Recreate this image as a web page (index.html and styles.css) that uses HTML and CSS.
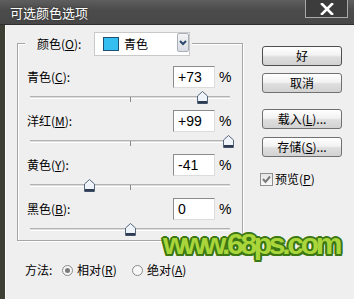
FILE: index.html
```html
<!DOCTYPE html>
<html>
<head>
<meta charset="utf-8">
<link rel="stylesheet" href="styles.css">
</head>
<body>
<div class="window">
  <div class="titlebar">
    <span class="title">可选颜色选项</span>
    <span class="close"><svg width="14" height="12" viewBox="0 0 14 12"><path d="M2 1 L12 11 M12 1 L2 11" stroke="#fff" stroke-width="2.6" stroke-linecap="square"/></svg></span>
  </div>
  <div class="frame">
    <div class="left">
      <div class="group">
        <div class="legend">
          <span class="leg-label">颜色(<u>O</u>):</span>
          <div class="select">
            <span class="swatch"></span>
            <span class="sel-text">青色</span>
            <span class="arrow"><svg width="8" height="6" viewBox="0 0 8 6"><path d="M1 1 L4 4 L7 1" fill="none" stroke="#2c4a6e" stroke-width="2"/></svg></span>
          </div>
        </div>
        <div class="row">
          <div class="line"><span class="lab">青色(<u>C</u>):</span><span class="num">+73</span><span class="pct">%</span></div>
          <div class="slider"><div class="track"></div><span class="tick"></span><svg class="thumb" style="left:167px" width="11" height="13" viewBox="0 0 11 13"><path d="M5.5 0.5 L10.5 5 L10.5 12.5 L0.5 12.5 L0.5 5 Z" fill="#eef4fa" stroke="#55657a"/><rect x="1" y="10" width="9" height="2.5" fill="#2d3c52"/></svg></div>
        </div>
        <div class="row">
          <div class="line"><span class="lab">洋红(<u>M</u>):</span><span class="num">+99</span><span class="pct">%</span></div>
          <div class="slider"><div class="track"></div><span class="tick"></span><svg class="thumb" style="left:193px" width="11" height="13" viewBox="0 0 11 13"><path d="M5.5 0.5 L10.5 5 L10.5 12.5 L0.5 12.5 L0.5 5 Z" fill="#eef4fa" stroke="#55657a"/><rect x="1" y="10" width="9" height="2.5" fill="#2d3c52"/></svg></div>
        </div>
        <div class="row">
          <div class="line"><span class="lab">黄色(<u>Y</u>):</span><span class="num">-41</span><span class="pct">%</span></div>
          <div class="slider"><div class="track"></div><span class="tick"></span><svg class="thumb" style="left:54px" width="11" height="13" viewBox="0 0 11 13"><path d="M5.5 0.5 L10.5 5 L10.5 12.5 L0.5 12.5 L0.5 5 Z" fill="#eef4fa" stroke="#55657a"/><rect x="1" y="10" width="9" height="2.5" fill="#2d3c52"/></svg></div>
        </div>
        <div class="row">
          <div class="line"><span class="lab">黑色(<u>B</u>):</span><span class="num">0</span><span class="pct">%</span></div>
          <div class="slider"><div class="track"></div><span class="tick"></span><svg class="thumb" style="left:95px" width="11" height="13" viewBox="0 0 11 13"><path d="M5.5 0.5 L10.5 5 L10.5 12.5 L0.5 12.5 L0.5 5 Z" fill="#eef4fa" stroke="#55657a"/><rect x="1" y="10" width="9" height="2.5" fill="#2d3c52"/></svg></div>
        </div>
      </div>
      <div class="method">
        <span class="m-label">方法:</span>
        <span class="radio on"></span><span class="r-text">相对(<u>R</u>)</span>
        <span class="radio"></span><span class="r-text">绝对(<u>A</u>)</span>
      </div>
    </div>
    <div class="right">
      <div class="btn default">好</div>
      <div class="btn b2">取消</div>
      <div class="btn b3">载入(<u>L</u>)...</div>
      <div class="btn b4">存储(<u>S</u>)...</div>
      <div class="check"><span class="box"><svg width="11" height="11" viewBox="0 0 11 11"><path d="M2 5 L4.5 8 L9 2.5" fill="none" stroke="#7a7a7a" stroke-width="2"/></svg></span><span class="c-text">预览(<u>P</u>)</span></div>
    </div>
  </div>
  <div class="watermark">www.68ps.com</div>
</div>
</body>
</html>
```

FILE: styles.css
```css
html, body {
  margin: 0;
  padding: 0;
}
body {
  width: 354px;
  height: 299px;
  overflow: hidden;
  font-family: "Noto Sans CJK SC", "Liberation Sans", sans-serif;
  font-size: 12px;
  color: #000;
}
u {
  text-decoration: underline;
  text-underline-offset: 1px;
}
.window {
  position: relative;
  width: 354px;
  height: 299px;
  display: flex;
  flex-direction: column;
  background: #efefef;
}
.titlebar {
  height: 25px;
  flex: none;
  display: flex;
  justify-content: space-between;
  align-items: flex-start;
  background: linear-gradient(180deg, #5e5e5e 0%, #4c4c4c 40%, #474747 100%);
  border-bottom: 1px solid #2e2e2e;
  box-sizing: border-box;
}
.title {
  margin-left: 10px;
  margin-top: 4px;
  font-size: 13px;
  line-height: 17px;
  color: #fff;
  text-shadow: 0 0 2px #222;
}
.close {
  width: 41px;
  height: 17px;
  margin-right: 6px;
  border: 1px solid #a9a9a9;
  border-top: none;
  background: #3c3c3c;
  display: flex;
  align-items: center;
  justify-content: center;
}
.frame {
  flex: 1;
  display: flex;
  border-left: 5px solid #3d3f35;
  box-shadow: inset 1px 0 0 #fbfbfb;
}
.left {
  margin-left: 12px;
  width: 226px;
  padding-top: 18px;
}
.group {
  border: 1px solid #a6a6a6;
  box-shadow: inset 1px 1px 0 #fff, 1px 1px 0 #fff;
  padding: 0 0 4px 0;
}
.legend {
  display: flex;
  align-items: center;
  height: 24px;
  margin-top: -12px;
  margin-left: 7px;
  width: 167px;
  padding-left: 12px;
  box-sizing: border-box;
  background: #efefef;
}
.leg-label {
  width: 57px;
  line-height: 14px;
}
.select {
  width: 96px;
  height: 24px;
  box-sizing: border-box;
  background: #fff;
  border: 1px solid #c9c9c9;
  display: flex;
  align-items: center;
}
.swatch {
  width: 14px;
  height: 12px;
  margin-left: 8px;
  background: #35bff0;
  border: 1px solid #1d4f70;
}
.sel-text {
  margin-left: 5px;
  flex: 1;
  line-height: 14px;
}
.arrow {
  width: 12px;
  height: 19px;
  align-self: flex-start;
  box-sizing: border-box;
  border: 1px solid #a8b0bc;
  border-radius: 2px;
  background: linear-gradient(#f4f4f4, #d9dde3);
  display: flex;
  align-items: center;
  justify-content: center;
}
.row {
  margin-top: 10px;
}
.row + .row {
  margin-top: 6px;
}
.line {
  display: flex;
  align-items: center;
  height: 22px;
  padding-left: 9px;
}
.lab {
  width: 146px;
  line-height: 14px;
}
.num {
  width: 42px;
  height: 22px;
  box-sizing: border-box;
  background: #fff;
  border: 1px solid;
  border-color: #8c8c8c #dcdcdc #dcdcdc #8c8c8c;
  padding-left: 4px;
  font-family: "Liberation Sans", sans-serif;
  font-size: 14px;
  line-height: 20px;
}
.pct {
  margin-left: 4px;
  font-family: "Liberation Sans", sans-serif;
  font-size: 14px;
}
.slider {
  position: relative;
  margin-top: 2px;
  margin-left: 12px;
  width: 200px;
  height: 14px;
}
.track {
  position: relative;
  top: 6px;
  height: 1px;
  border-top: 1px solid #b3b3b3;
  border-bottom: 1px solid #fff;
  background: #dcdcdc;
}
.tick {
  position: absolute;
  left: 100px;
  top: 7px;
  width: 1px;
  height: 5px;
  background: #8a8a8a;
}
.thumb {
  position: absolute;
  top: 1px;
}
.method {
  display: flex;
  align-items: center;
  margin-top: 22px;
  padding-left: 8px;
}
.m-label {
  width: 37px;
  line-height: 14px;
}
.radio {
  width: 11px;
  height: 11px;
  box-sizing: border-box;
  border: 1px solid #8a8a8a;
  border-radius: 50%;
  background: #f7f7f7;
  display: flex;
  align-items: center;
  justify-content: center;
}
.radio.on::after {
  content: "";
  width: 5px;
  height: 5px;
  border-radius: 50%;
  background: #7a7a7a;
}
.r-text {
  margin-left: 4px;
  width: 55px;
  line-height: 14px;
}
.right {
  margin-left: 19px;
  width: 80px;
  padding-top: 21px;
  display: flex;
  flex-direction: column;
}
.btn {
  height: 20px;
  box-sizing: border-box;
  border: 1px solid #707070;
  border-radius: 3px;
  background: linear-gradient(180deg, #ffffff 0%, #f2f2f2 45%, #dedede 55%, #d2d2d2 100%);
  display: flex;
  align-items: center;
  justify-content: center;
  line-height: 14px;
}
.btn.default {
  border-color: #4e4e4e;
}
.b2 { margin-top: 7px; }
.b3 { margin-top: 16px; }
.b4 { margin-top: 8px; }
.check {
  display: flex;
  align-items: center;
  margin-top: 15px;
  margin-left: -2px;
}
.box {
  width: 13px;
  height: 13px;
  box-sizing: border-box;
  border: 1px solid #8f8f8f;
  background: linear-gradient(#e6e6e6, #f8f8f8);
  display: flex;
  align-items: center;
  justify-content: center;
}
.c-text {
  margin-left: 2px;
  line-height: 14px;
}
.watermark {
  position: absolute;
  left: 163px;
  top: 227px;
  font-family: "Liberation Sans", sans-serif;
  font-weight: bold;
  font-size: 30px;
  line-height: 34px;
  letter-spacing: -3.3px;
  white-space: nowrap;
  color: #aad63c;
  text-shadow:
    2px 0 0 #3c7814, -2px 0 0 #3c7814, 0 2px 0 #3c7814, 0 -2px 0 #3c7814,
    1.5px 1.5px 0 #3c7814, -1.5px 1.5px 0 #3c7814, 1.5px -1.5px 0 #3c7814, -1.5px -1.5px 0 #3c7814,
    0 0 4px #ffffff;
}
```
